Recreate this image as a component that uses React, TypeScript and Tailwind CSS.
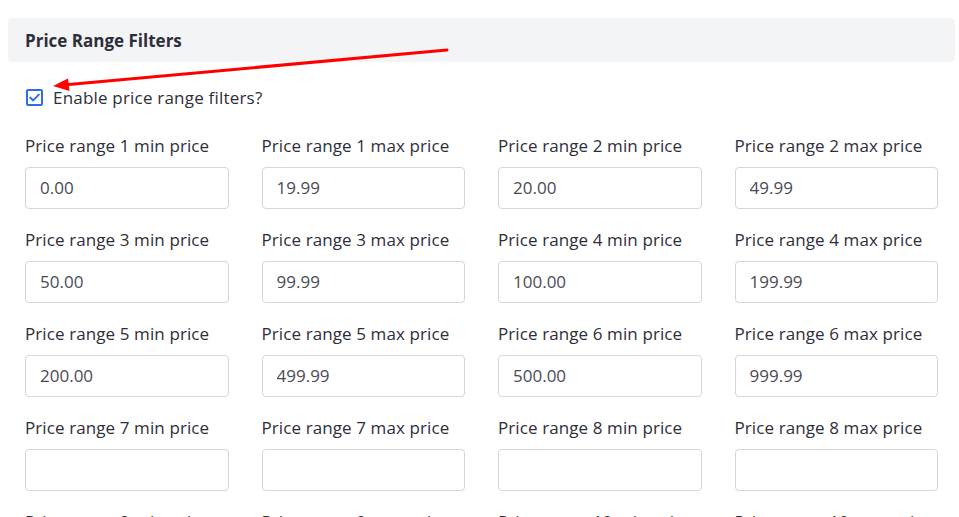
const values: string[] = [
    "0.00", "19.99", "20.00", "49.99",
    "50.00", "99.99", "100.00", "199.99",
    "200.00", "499.99", "500.00", "999.99",
    "", "", "", "",
    "", "", "", "",
];

type PriceFieldProps = {
    label: string;
    value: string;
};

const PriceField = ({ label, value }: PriceFieldProps) => (
    <div className="flex flex-col">
        <label className="block h-6 leading-6 text-[17px] tracking-[0.1px] text-[#2e2e3a] whitespace-nowrap mb-[9px]">{label}</label>
        <input
            className="h-[42px] w-full rounded-[4px] border border-[#d4d6dc] bg-white px-[14px] text-[17px] text-[#4a4a55] outline-none"
            type="text"
            defaultValue={value}
        />
    </div>
);

const Arrow = () => (
    <svg className="pointer-events-none absolute left-0 top-0" width="959" height="120" viewBox="0 0 959 120">
        <line x1="447" y1="50" x2="66" y2="84.8" stroke="#ff0000" strokeWidth="3" strokeLinecap="round" />
        <polygon points="53,86 68,78.5 69.5,91" fill="#ff0000" />
    </svg>
);

const App = () => {
    const fields = values.map((value, i) => {
        const range = Math.floor(i / 2) + 1;
        const kind = i % 2 === 0 ? "min" : "max";
        return { label: `Price range ${range} ${kind} price`, value };
    });

    return (
        <div className="relative min-h-screen overflow-hidden bg-white pt-[18px] pl-2 pr-1 font-['Open_Sans',sans-serif]">
            <div className="flex h-[44px] items-center rounded-[4px] bg-[#f3f4f6] px-[17px]">
                <h2 className="mt-[2px] text-[17px] font-bold text-[#2e2e3a]">Price Range Filters</h2>
            </div>
            <div className="px-[17px]">
                <label className="mt-[23px] flex items-center gap-[10px] text-[17px] tracking-[0.2px] text-[#2e2e3a]">
                    <span className="flex h-[17px] w-[17px] ml-px items-center justify-center rounded-[2px] border-2 border-[#2f6de1] bg-white">
                        <svg width="11" height="9" viewBox="0 0 11 9">
                            <path d="M1.2 4.6 L4.2 7.4 L9.8 1.6" fill="none" stroke="#2f6de1" strokeWidth="2" strokeLinecap="round" strokeLinejoin="round" />
                        </svg>
                    </span>
                    Enable price range filters?
                </label>
                <div className="mt-[23px] grid grid-cols-4 gap-x-[33px] gap-y-[19px]">
                    {fields.map((f) => (
                        <PriceField key={f.label} label={f.label} value={f.value} />
                    ))}
                </div>
            </div>
            <Arrow />
        </div>
    );
};

export default App;
